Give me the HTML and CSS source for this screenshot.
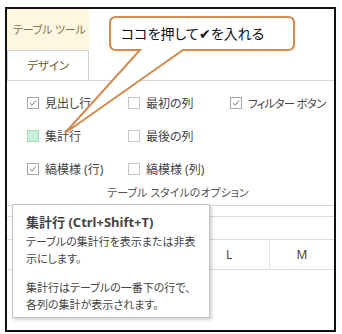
FILE: index.html
```html
<!DOCTYPE html>
<html lang="ja">
<head>
  <meta charset="UTF-8">
  <title>テーブル ツール</title>
  <link rel="stylesheet" href="styles.css">
</head>
<body>
  <div class="frame">
    <div class="tabbar">
      <div class="tabcol">
        <div class="context">テーブル ツール</div>
        <div class="tab">デザイン</div>
      </div>
    </div>
    <div class="group">
      <div class="options">
        <label class="opt"><span class="box on"><svg viewBox="0 0 12 12"><polyline points="2.5,6 5,8.5 9.5,3"/></svg></span>見出し行</label>
        <label class="opt"><span class="box"></span>最初の列</label>
        <label class="opt narrow"><span class="box on"><svg viewBox="0 0 12 12"><polyline points="2.5,6 5,8.5 9.5,3"/></svg></span>フィルター ボタン</label>
        <label class="opt"><span class="box hover"></span>集計行</label>
        <label class="opt"><span class="box"></span>最後の列</label>
        <div></div>
        <label class="opt"><span class="box on"><svg viewBox="0 0 12 12"><polyline points="2.5,6 5,8.5 9.5,3"/></svg></span>縞模様 (行)</label>
        <label class="opt"><span class="box"></span>縞模様 (列)</label>
        <div></div>
      </div>
      <div class="group-name">テーブル スタイルのオプション</div>
    </div>
    <div class="sheet">
      <div class="row r1"></div>
      <div class="row r2"></div>
      <div class="row head">
        <span class="spacer"></span>
        <span class="col">L</span>
        <span class="col">M</span>
      </div>
    </div>
    <!-- tooltip over the sheet -->
    <div class="tooltip">
      <div class="tip-title">集計行 (Ctrl+Shift+T)</div>
      <p>テーブルの集計行を表示または非表<br>示にします。</p>
      <p>集計行はテーブルの一番下の行で、<br>各列の集計が表示されます。</p>
    </div>
  </div>
  <svg class="callout" width="342" height="140" viewBox="0 0 342 140">
    <path d="M116,17 H288 Q294,17 294,23 V44 Q294,50 288,50 H183 L65,133 L140,50 H116 Q110,50 110,44 V23 Q110,17 116,17 Z"/>
    <text x="121" y="39">ココを押して✔を入れる</text>
  </svg>
</body>
</html>
```

FILE: styles.css
```css
body {
  margin: 0;
  background: #fff;
  font-family: "Noto Sans", "Noto Sans CJK JP", sans-serif;
  font-feature-settings: "palt";
  position: relative;
}
.frame {
  position: relative;
  margin: 7px 0 0 5px;
  width: 327px;
  height: 321px;
  border: 2px solid #111;
  overflow: hidden;
  background: #fff;
}
.tabbar {
  border-bottom: 1px solid #d6d6d6;
  height: 71px;
}
.tabcol {
  width: 82px;
}
.context {
  height: 41px;
  background: #fdf6e1;
  color: #86714a;
  font-size: 11px;
  line-height: 42px;
  padding-left: 6px;
  white-space: nowrap;
  letter-spacing: -0.2px;
}
.tab {
  height: 30px;
  box-sizing: border-box;
  border: 1px solid #d3d3d3;
  border-bottom: none;
  background: #fff;
  color: #6e5a33;
  font-size: 11.5px;
  line-height: 29px;
  padding-left: 19px;
  white-space: nowrap;
}
.group {
  border-bottom: 1px solid #d6d6d6;
  padding: 5px 0 4px 20px;
}
.options {
  display: grid;
  grid-template-columns: 101px 102px 1fr;
  grid-auto-rows: 33px;
}
.opt {
  display: flex;
  align-items: center;
  gap: 6px;
  font-size: 12px;
  color: #444;
  white-space: nowrap;
}
.opt.narrow {
  font-size: 11.5px;
  letter-spacing: -0.8px;
}
.box {
  width: 12px;
  height: 12px;
  box-sizing: border-box;
  border: 1px solid #c6c6c6;
  background: #fff;
  display: inline-block;
}
.box.on {
  border-color: #a6a6a6;
}
.box svg {
  display: block;
  width: 10px;
  height: 10px;
}
.box polyline {
  fill: none;
  stroke: #7a7a7a;
  stroke-width: 1.2;
}
.box.hover {
  background: #c8eedb;
  border-color: #a9d8c0;
}
.group-name {
  text-align: center;
  font-size: 11px;
  color: #555;
  line-height: 16px;
  padding-right: 5px;
}
.row {
  border-bottom: 1px solid #dcdcdc;
}
.r1 { height: 10px; }
.r2 { height: 22px; }
.head {
  height: 29px;
  display: flex;
}
.spacer {
  width: 188px;
}
.col {
  width: 82px;
  text-align: center;
  line-height: 29px;
  font-size: 12px;
  color: #444;
}
.col + .col {
  border-left: 1px solid #e4e4e4;
  width: 66px;
}
.tooltip {
  position: absolute;
  left: 5px;
  top: 195px;
  width: 198px;
  height: 114px;
  box-sizing: border-box;
  background: #fff;
  border: 1px solid #c4c4c4;
  box-shadow: 2px 2px 3px rgba(0, 0, 0, 0.18);
  padding: 8px 0 0 13px;
  color: #444;
}
.tip-title {
  font-weight: bold;
  font-size: 13px;
  line-height: 18px;
  margin-bottom: 2px;
}
.tooltip p {
  margin: 0 0 12px 0;
  font-size: 11px;
  line-height: 17px;
  white-space: nowrap;
}
.callout {
  position: absolute;
  left: 0;
  top: 0;
}
.callout path {
  fill: #fff;
  stroke: #d18a4f;
  stroke-width: 2;
}
.callout text {
  font-size: 14px;
  fill: #111;
}
```
